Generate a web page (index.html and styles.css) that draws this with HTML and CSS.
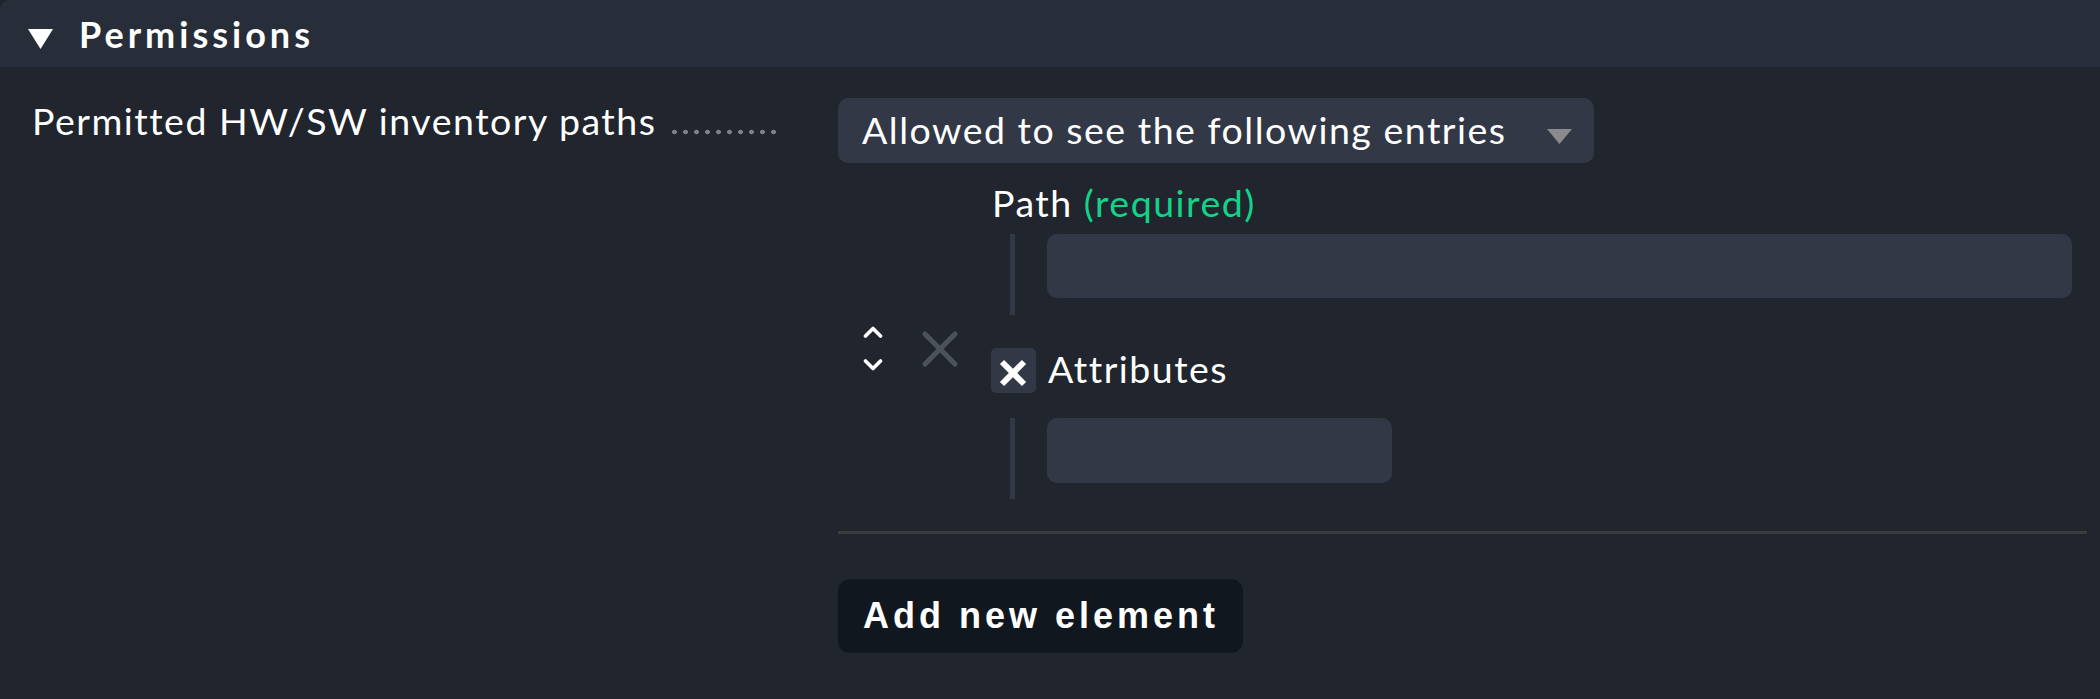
FILE: index.html
```html
<!DOCTYPE html>
<html lang="en">
<head>
<meta charset="utf-8">
<title>Permissions</title>
<link rel="stylesheet" href="styles.css">
</head>
<body>
<div class="section">
  <div class="section-head">
    <svg class="fold" width="25" height="20" viewBox="0 0 25 20"><polygon points="0,0 25,0 12.5,20" fill="#ffffff"/></svg>
    <span class="section-title">Permissions</span>
  </div>
  <div class="form-row">
    <div class="legend">
      <span class="legend-text">Permitted HW/SW inventory paths</span>
      <span class="leader"></span>
    </div>
    <div class="value">
      <div class="select">
        <span class="select-text">Allowed to see the following entries</span>
        <svg class="select-arrow" width="25" height="15" viewBox="0 0 25 15"><polygon points="0,0 25,0 12.5,15" fill="#8a8b8d"/></svg>
      </div>
      <div class="list-item">
        <div class="controls">
          <svg class="updown" width="20" height="45" viewBox="0 0 20 45">
            <polyline points="2.5,10 10,2.5 17.5,10" fill="none" stroke="#ffffff" stroke-width="3.6" stroke-linecap="round" stroke-linejoin="round"/>
            <polyline points="2.5,35 10,42.5 17.5,35" fill="none" stroke="#ffffff" stroke-width="3.6" stroke-linecap="round" stroke-linejoin="round"/>
          </svg>
          <svg class="remove" width="36" height="36" viewBox="0 0 36 36">
            <line x1="3" y1="3" x2="33" y2="33" stroke="#4c525a" stroke-width="5" stroke-linecap="round"/>
            <line x1="33" y1="3" x2="3" y2="33" stroke="#4c525a" stroke-width="5" stroke-linecap="round"/>
          </svg>
        </div>
        <div class="item-body">
          <div class="field-label">Path <span class="required">(required)</span></div>
          <div class="nested">
            <div class="input input-wide"></div>
          </div>
          <div class="check-row">
            <span class="checkbox">
              <svg width="45" height="45" viewBox="0 0 45 45">
                <line x1="11" y1="14" x2="33" y2="36" stroke="#ffffff" stroke-width="6"/>
                <line x1="33" y1="14" x2="11" y2="36" stroke="#ffffff" stroke-width="6"/>
              </svg>
            </span>
            <span class="check-label">Attributes</span>
          </div>
          <div class="nested nested-attr">
            <div class="input input-narrow"></div>
          </div>
        </div>
      </div>
      <div class="separator"></div>
      <button class="add-btn" type="button">Add new element</button>
    </div>
  </div>
</div>
</body>
</html>
```

FILE: styles.css
```css
html, body {
  margin: 0;
  padding: 0;
}
body {
  background: #1f232a;
  font-family: Lato, "Noto Sans", sans-serif;
  color: #ffffff;
  width: 2100px;
  height: 699px;
  overflow: hidden;
}
.section {
  background: #20252e;
  border-top-left-radius: 9px;
  height: 699px;
  overflow: hidden;
}
.section-head {
  height: 67px;
  box-sizing: border-box;
  background: #282e39;
  display: flex;
  align-items: flex-start;
  padding: 13px 0 0 28px;
}
.fold {
  margin-top: 16px;
  flex: none;
}
.section-title {
  margin-left: 26px;
  font-size: 36px;
  line-height: 43.2px;
  font-weight: 700;
  letter-spacing: 4px;
}
.form-row {
  display: flex;
  padding-top: 31px;
}
.legend {
  width: 838px;
  flex: none;
  box-sizing: border-box;
  padding: 0 0 0 32px;
  display: flex;
  align-items: flex-start;
  font-size: 37.5px;
  line-height: 45px;
  letter-spacing: 1.5px;
}
.leader {
  width: 104px;
  height: 6px;
  margin: 31px 0 0 16px;
  background-image: radial-gradient(circle at 2.5px 3px, #7c8087 2.2px, transparent 2.6px);
  background-size: 11px 6px;
  background-repeat: repeat-x;
}
.value {
  width: 1249px;
  flex: none;
}
.select {
  width: 756px;
  height: 65px;
  box-sizing: border-box;
  background: #323846;
  border-radius: 10px;
  display: flex;
  align-items: flex-start;
  justify-content: space-between;
  padding: 0 22px 0 24px;
  font-size: 37.5px;
  line-height: 63px;
  letter-spacing: 1.5px;
}
.select-arrow {
  margin-top: 31px;
}
.list-item {
  display: flex;
  margin-top: 17px;
}
.controls {
  width: 153px;
  flex: none;
  display: flex;
  align-items: center;
  padding-left: 25px;
  box-sizing: border-box;
  align-self: center;
  margin-top: 18px;
}
.remove {
  margin-left: 39px;
}
.item-body {
  flex: 1;
  font-size: 37.5px;
  line-height: 45px;
  letter-spacing: 1.5px;
}
.field-label {
  padding-left: 1px;
}
.required {
  color: #13d389;
}
.nested {
  margin: 9px 0 0 19px;
  border-left: 5px solid #323846;
  padding: 0 0 17px 32px;
}
.nested-attr {
  margin-top: 25px;
  padding-bottom: 16px;
}
.input {
  background: #323846;
  border-radius: 10px;
}
.input-wide {
  width: 1025px;
  height: 64px;
}
.input-narrow {
  width: 345px;
  height: 65px;
}
.check-row {
  display: flex;
  align-items: flex-start;
  margin-top: 33px;
  height: 45px;
}
.checkbox {
  width: 45px;
  height: 45px;
  background: #323846;
  border-radius: 5px;
  display: block;
  flex: none;
}
.checkbox svg {
  display: block;
}
.check-label {
  margin: -2px 0 0 12px;
}
.separator {
  height: 3px;
  background: #3b3b3c;
  margin-top: 32px;
}
.add-btn {
  display: block;
  margin-top: 45px;
  height: 74px;
  border: none;
  border-radius: 12px;
  background: #11171f;
  color: #ffffff;
  font-family: "Liberation Sans", Arial, sans-serif;
  font-weight: 700;
  font-size: 36px;
  letter-spacing: 4px;
  padding: 0 24px 0 25px;
  line-height: 74px;
  cursor: pointer;
}
```
